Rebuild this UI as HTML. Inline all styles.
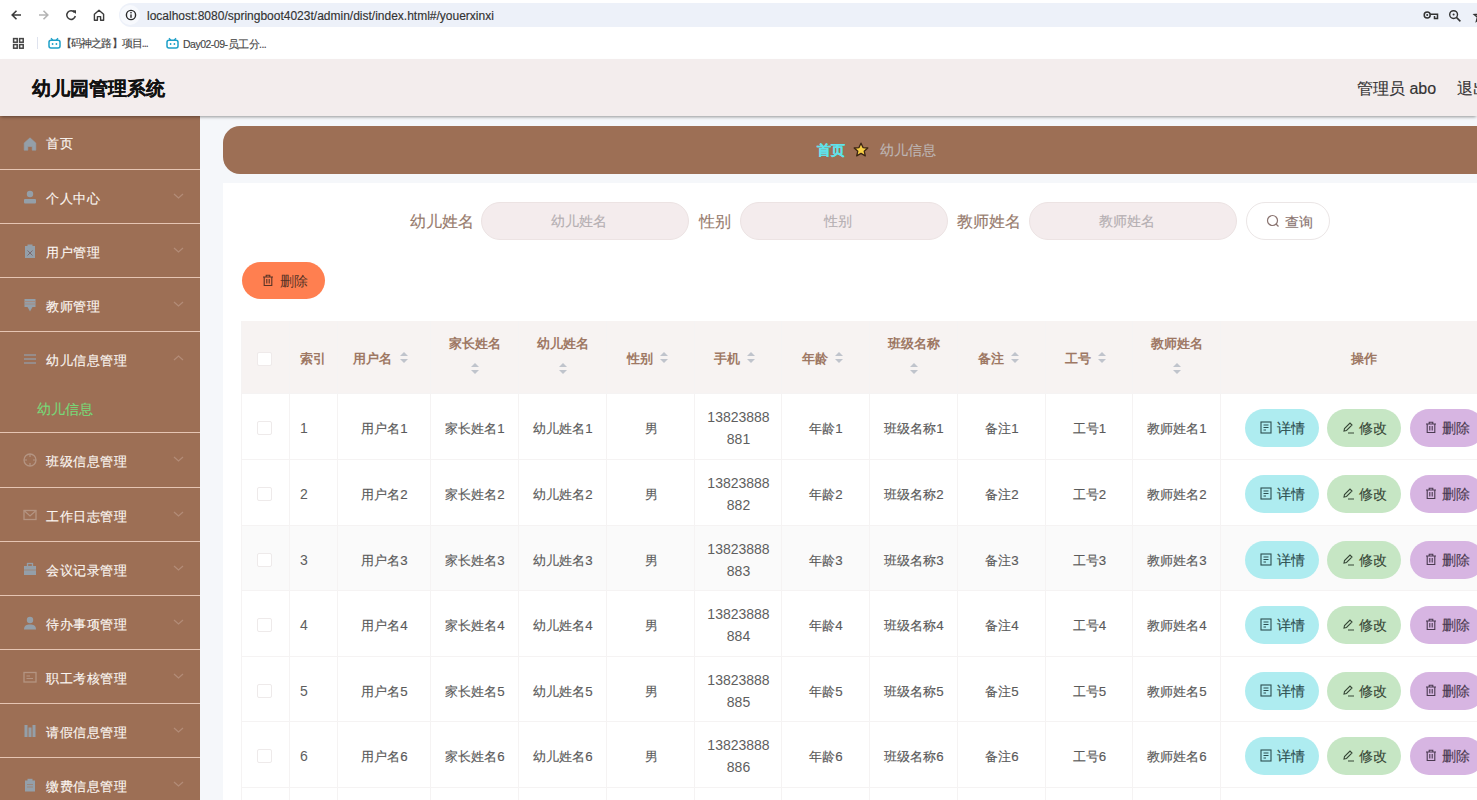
<!DOCTYPE html><html><head><meta charset="utf-8"><style>
*{margin:0;padding:0;box-sizing:border-box}
html,body{width:1477px;height:800px;overflow:hidden;background:#fff;font-family:"Liberation Sans",sans-serif;}
.a{position:absolute}
.t{position:absolute;white-space:nowrap;line-height:1;-webkit-text-stroke:0.15px currentColor}
svg{position:absolute;overflow:visible}
</style></head><body>
<div class="a" style="left:0;top:0;width:1477px;height:30px;background:#fff"></div><div class="a" style="left:119px;top:3px;width:1400px;height:24px;border-radius:12px;background:#edf1f9"></div><div class="a" style="left:120px;top:5px;width:20px;height:20px;border-radius:10px;background:#f7f9fd"></div><svg style="left:10px;top:8px;" width="14" height="14" viewBox="0 0 14 14"><path d="M11 7H2.5M6.5 2.8L2.2 7L6.5 11.2" fill="none" stroke="#3c3c3c" stroke-width="1.6"/></svg><svg style="left:37px;top:8px;" width="14" height="14" viewBox="0 0 14 14"><path d="M2 7H10.5M6.5 2.8L10.8 7L6.5 11.2" fill="none" stroke="#b4b4b4" stroke-width="1.6"/></svg><svg style="left:64px;top:8px;" width="14" height="14" viewBox="0 0 14 14"><path d="M10.6 4.6A4.3 4.3 0 1 0 11.3 8" fill="none" stroke="#3c3c3c" stroke-width="1.5"/><path d="M8.3 2.2L12 2.2L12 5.9Z" fill="#3c3c3c"/></svg><svg style="left:92px;top:8px;" width="14" height="14" viewBox="0 0 14 14"><path d="M2.4 12.2V6.2L7 2.2L11.6 6.2V12.2H8.6V8.6H5.4V12.2Z" fill="none" stroke="#3c3c3c" stroke-width="1.4" stroke-linejoin="round"/></svg><svg style="left:124px;top:8px;" width="14" height="14" viewBox="0 0 14 14"><circle cx="7" cy="7" r="4.6" fill="none" stroke="#2a2a2a" stroke-width="1.4"/><rect x="6.3" y="6.4" width="1.4" height="3.4" fill="#2a2a2a"/><rect x="6.3" y="4" width="1.4" height="1.4" fill="#2a2a2a"/></svg><div class="t" style="left:147px;top:9.5px;font-size:12px;color:#333">localhost:8080/springboot4023t/admin/dist/index.html#/youerxinxi</div><svg style="left:1423px;top:10px;" width="16" height="11" viewBox="0 0 16 11"><circle cx="4.2" cy="5" r="3" fill="none" stroke="#333" stroke-width="1.5"/><circle cx="4.2" cy="5" r="1" fill="#333"/><path d="M7.2 4.2H14.5V8.5H11.5V6" fill="none" stroke="#333" stroke-width="1.5"/></svg><svg style="left:1448px;top:9px;" width="14" height="14" viewBox="0 0 14 14"><circle cx="5.6" cy="5.6" r="3.9" fill="none" stroke="#333" stroke-width="1.4"/><circle cx="5.6" cy="5.6" r="1" fill="#333"/><path d="M8.4 8.4L12.4 12.4" stroke="#333" stroke-width="1.5"/></svg><svg style="left:1473px;top:9px;" width="14" height="14" viewBox="0 0 14 14"><path d="M7 1.5L8.6 5.3L12.7 5.6L9.6 8.2L10.6 12.2L7 10L3.4 12.2L4.4 8.2L1.3 5.6L5.4 5.3Z" fill="none" stroke="#333" stroke-width="1.4"/></svg><div class="a" style="left:0;top:30px;width:1477px;height:29px;background:#fff"></div><svg style="left:12px;top:37px;" width="13" height="13" viewBox="0 0 13 13"><rect x="1.6" y="1.6" width="3.6" height="3.6" fill="none" stroke="#454545" stroke-width="1.5"/><rect x="7.6" y="1.6" width="3.6" height="3.6" fill="none" stroke="#454545" stroke-width="1.5"/><rect x="1.6" y="7.6" width="3.6" height="3.6" fill="none" stroke="#454545" stroke-width="1.5"/><rect x="7.6" y="7.6" width="3.6" height="3.6" fill="none" stroke="#454545" stroke-width="1.5"/></svg><div class="a" style="left:37px;top:37px;width:1px;height:12px;background:#dfe3ee"></div><svg style="left:48px;top:37px;" width="13" height="12" viewBox="0 0 13 12"><path d="M3 1.2L4.8 3.2M10 1.2L8.2 3.2" stroke="#1ea0c8" stroke-width="1.3"/><rect x="1" y="3.3" width="11" height="7.6" rx="2" fill="none" stroke="#1ea0c8" stroke-width="1.5"/><circle cx="4.6" cy="7" r=".9" fill="#1ea0c8"/><circle cx="8.4" cy="7" r=".9" fill="#1ea0c8"/></svg><svg style="left:166px;top:37px;" width="13" height="12" viewBox="0 0 13 12"><path d="M3 1.2L4.8 3.2M10 1.2L8.2 3.2" stroke="#1ea0c8" stroke-width="1.3"/><rect x="1" y="3.3" width="11" height="7.6" rx="2" fill="none" stroke="#1ea0c8" stroke-width="1.5"/><circle cx="4.6" cy="7" r=".9" fill="#1ea0c8"/><circle cx="8.4" cy="7" r=".9" fill="#1ea0c8"/></svg><div class="t" style="left:61px;top:38px;font-size:10.5px;letter-spacing:-0.9px;color:#4a4a4a;color:#474747">【码神之路】项目...</div><div class="t" style="left:183px;top:39px;font-size:10.5px;letter-spacing:-0.5px;color:#474747">Day02-09-员工分...</div><div class="a" style="left:0;top:59px;width:1477px;height:57px;background:#f3eded;box-shadow:0 2px 3px -1px rgba(0,0,0,.4);z-index:2"></div><div class="t" style="left:32px;top:79px;font-size:19px;font-weight:bold;color:#111;z-index:3">幼儿园管理系统</div><div class="t" style="left:1357px;top:81px;font-size:16px;color:#333;z-index:3">管理员 abo</div><div class="t" style="left:1457px;top:81px;font-size:16px;color:#333;z-index:3">退出</div><div class="a" style="left:200px;top:116px;width:1277px;height:684px;background:#f5f7fa"></div><div class="a" style="left:0;top:116px;width:200px;height:684px;background:#9d6f55"></div><div class="t" style="left:46px;top:137px;font-size:13.3px;letter-spacing:0.55px;color:#fbf6f2">首页</div><svg style="left:23px;top:136px;" width="14" height="14" viewBox="0 0 14 14"><path d="M7 1.8L12.8 7V14.2H9.2V10.5H4.8V14.2H1.2V7Z" fill="#949fa9" stroke="#949fa9" stroke-width=".6" stroke-linejoin="round"/></svg><div class="a" style="left:0;top:169px;width:200px;height:1px;background:#e6c5b3"></div><div class="t" style="left:46px;top:192px;font-size:13.3px;letter-spacing:0.55px;color:#fbf6f2">个人中心</div><svg style="left:23px;top:190px;" width="14" height="14" viewBox="0 0 14 14"><circle cx="7" cy="4" r="3.2" fill="#949fa9"/><rect x="1" y="9" width="12" height="4.5" rx="1" fill="#949fa9"/></svg><svg style="left:173px;top:193px;" width="11" height="6" viewBox="0 0 11 6"><path d="M1 1L5.5 5L10 1" fill="none" stroke="#b38c78" stroke-width="1.2"/></svg><div class="a" style="left:0;top:223px;width:200px;height:1px;background:#e6c5b3"></div><div class="t" style="left:46px;top:246px;font-size:13.3px;letter-spacing:0.55px;color:#fbf6f2">用户管理</div><svg style="left:23px;top:244px;" width="14" height="14" viewBox="0 0 14 14"><rect x="2" y="2" width="10" height="12" fill="#949fa9"/><rect x="4.5" y="0.5" width="5" height="2.5" fill="#949fa9"/><path d="M4.5 6.5L9.5 11.5M9.5 6.5L4.5 11.5" stroke="#7a6a70" stroke-width="1"/></svg><svg style="left:173px;top:247px;" width="11" height="6" viewBox="0 0 11 6"><path d="M1 1L5.5 5L10 1" fill="none" stroke="#b38c78" stroke-width="1.2"/></svg><div class="a" style="left:0;top:277px;width:200px;height:1px;background:#e6c5b3"></div><div class="t" style="left:46px;top:300px;font-size:13.3px;letter-spacing:0.55px;color:#fbf6f2">教师管理</div><svg style="left:23px;top:298px;" width="14" height="14" viewBox="0 0 14 14"><rect x="1.5" y="1" width="11" height="8" fill="#949fa9"/><path d="M1.5 3.5H12.5M1.5 6H12.5" stroke="#a88878" stroke-width=".8"/><path d="M4.5 9L7 13.5L9.5 9Z" fill="#949fa9"/></svg><svg style="left:173px;top:301px;" width="11" height="6" viewBox="0 0 11 6"><path d="M1 1L5.5 5L10 1" fill="none" stroke="#b38c78" stroke-width="1.2"/></svg><div class="a" style="left:0;top:331px;width:200px;height:1px;background:#e6c5b3"></div><div class="t" style="left:46px;top:354px;font-size:13.3px;letter-spacing:0.55px;color:#fbf6f2">幼儿信息管理</div><svg style="left:23px;top:352px;" width="14" height="14" viewBox="0 0 14 14"><path d="M1 3H13M1 7H13M1 11H13" stroke="#949fa9" stroke-width="1.6" opacity=".85"/></svg><svg style="left:173px;top:355px;" width="11" height="6" viewBox="0 0 11 6"><path d="M1 5L5.5 1L10 5" fill="none" stroke="#b38c78" stroke-width="1.2"/></svg><div class="a" style="left:0;top:432px;width:200px;height:1px;background:#e6c5b3"></div><div class="t" style="left:46px;top:455px;font-size:13.3px;letter-spacing:0.55px;color:#fbf6f2">班级信息管理</div><svg style="left:23px;top:453px;" width="14" height="14" viewBox="0 0 14 14"><circle cx="7" cy="7" r="6" fill="none" stroke="#b49482" stroke-width="1.3"/><path d="M7 1V4M7 10V13M1 7H4M10 7H13" stroke="#b49482" stroke-width="1.2"/></svg><svg style="left:173px;top:456px;" width="11" height="6" viewBox="0 0 11 6"><path d="M1 1L5.5 5L10 1" fill="none" stroke="#b38c78" stroke-width="1.2"/></svg><div class="a" style="left:0;top:487px;width:200px;height:1px;background:#e6c5b3"></div><div class="t" style="left:46px;top:510px;font-size:13.3px;letter-spacing:0.55px;color:#fbf6f2">工作日志管理</div><svg style="left:23px;top:508px;" width="14" height="14" viewBox="0 0 14 14"><rect x="1" y="2.5" width="12" height="9" fill="none" stroke="#b49482" stroke-width="1.3"/><path d="M1 2.5L7 8L13 2.5" fill="none" stroke="#b49482" stroke-width="1.2"/></svg><svg style="left:173px;top:511px;" width="11" height="6" viewBox="0 0 11 6"><path d="M1 1L5.5 5L10 1" fill="none" stroke="#b38c78" stroke-width="1.2"/></svg><div class="a" style="left:0;top:541px;width:200px;height:1px;background:#e6c5b3"></div><div class="t" style="left:46px;top:564px;font-size:13.3px;letter-spacing:0.55px;color:#fbf6f2">会议记录管理</div><svg style="left:23px;top:562px;" width="14" height="14" viewBox="0 0 14 14"><rect x="1" y="4" width="12" height="9" fill="#949fa9"/><rect x="4.5" y="1.5" width="5" height="3" fill="none" stroke="#949fa9" stroke-width="1.3"/><path d="M1 8H13" stroke="#a08070" stroke-width=".8"/></svg><svg style="left:173px;top:565px;" width="11" height="6" viewBox="0 0 11 6"><path d="M1 1L5.5 5L10 1" fill="none" stroke="#b38c78" stroke-width="1.2"/></svg><div class="a" style="left:0;top:595px;width:200px;height:1px;background:#e6c5b3"></div><div class="t" style="left:46px;top:618px;font-size:13.3px;letter-spacing:0.55px;color:#fbf6f2">待办事项管理</div><svg style="left:23px;top:616px;" width="14" height="14" viewBox="0 0 14 14"><circle cx="7" cy="4" r="3.2" fill="#949fa9"/><path d="M1 13.5C1 9.5 3.5 8.5 7 8.5S13 9.5 13 13.5Z" fill="#949fa9"/></svg><svg style="left:173px;top:619px;" width="11" height="6" viewBox="0 0 11 6"><path d="M1 1L5.5 5L10 1" fill="none" stroke="#b38c78" stroke-width="1.2"/></svg><div class="a" style="left:0;top:649px;width:200px;height:1px;background:#e6c5b3"></div><div class="t" style="left:46px;top:672px;font-size:13.3px;letter-spacing:0.55px;color:#fbf6f2">职工考核管理</div><svg style="left:23px;top:670px;" width="14" height="14" viewBox="0 0 14 14"><rect x="1" y="2.5" width="12" height="9.5" fill="none" stroke="#b49482" stroke-width="1.3"/><path d="M3.5 6H7M3.5 8.5H10" stroke="#b49482" stroke-width="1"/></svg><svg style="left:173px;top:673px;" width="11" height="6" viewBox="0 0 11 6"><path d="M1 1L5.5 5L10 1" fill="none" stroke="#b38c78" stroke-width="1.2"/></svg><div class="a" style="left:0;top:703px;width:200px;height:1px;background:#e6c5b3"></div><div class="t" style="left:46px;top:726px;font-size:13.3px;letter-spacing:0.55px;color:#fbf6f2">请假信息管理</div><svg style="left:23px;top:724px;" width="14" height="14" viewBox="0 0 14 14"><rect x="1.5" y="1" width="3" height="12" fill="#949fa9"/><rect x="5.5" y="3.5" width="3" height="9.5" fill="#949fa9"/><rect x="9.5" y="1" width="3" height="12" fill="#949fa9"/></svg><svg style="left:173px;top:727px;" width="11" height="6" viewBox="0 0 11 6"><path d="M1 1L5.5 5L10 1" fill="none" stroke="#b38c78" stroke-width="1.2"/></svg><div class="a" style="left:0;top:757px;width:200px;height:1px;background:#e6c5b3"></div><div class="t" style="left:46px;top:780px;font-size:13.3px;letter-spacing:0.55px;color:#fbf6f2">缴费信息管理</div><svg style="left:23px;top:778px;" width="14" height="14" viewBox="0 0 14 14"><rect x="2" y="2.5" width="10" height="11" fill="#949fa9"/><rect x="4.5" y="0.8" width="5" height="2.5" fill="#949fa9"/><path d="M4 6.5H10M4 9H10" stroke="#a08070" stroke-width=".8"/></svg><svg style="left:173px;top:781px;" width="11" height="6" viewBox="0 0 11 6"><path d="M1 1L5.5 5L10 1" fill="none" stroke="#b38c78" stroke-width="1.2"/></svg><div class="t" style="left:37px;top:402.5px;font-size:13.5px;color:#78d878">幼儿信息</div><div class="a" style="left:223px;top:126px;width:1300px;height:48px;border-radius:17px;background:#9d6f55"></div><div class="t" style="left:817px;top:143px;font-size:14px;font-weight:bold;color:#5fe3ec">首页</div><svg style="left:853px;top:142px;" width="16" height="15" viewBox="0 0 16 15"><path d="M8 1.2L10 5.6L14.8 6L11.2 9.2L12.3 13.9L8 11.4L3.7 13.9L4.8 9.2L1.2 6L6 5.6Z" fill="#f7cf45" stroke="#3a2414" stroke-width="1.3" stroke-linejoin="round"/></svg><div class="t" style="left:880px;top:143px;font-size:14px;color:#bdb5b3">幼儿信息</div><div class="a" style="left:223px;top:183px;width:1300px;height:700px;background:#fff"></div><div class="t" style="left:410px;top:214px;font-size:16px;color:#977b6d">幼儿姓名</div><div class="a" style="left:481px;top:202px;width:208px;height:38px;border-radius:19px;background:#f4eced;border:1px solid #ece3e3"></div><div class="t" style="left:475px;width:208px;text-align:center;top:214px;font-size:14px;color:#b5afb2">幼儿姓名</div><div class="t" style="left:699px;top:214px;font-size:16px;color:#977b6d">性别</div><div class="a" style="left:740px;top:202px;width:208px;height:38px;border-radius:19px;background:#f4eced;border:1px solid #ece3e3"></div><div class="t" style="left:734px;width:208px;text-align:center;top:214px;font-size:14px;color:#b5afb2">性别</div><div class="t" style="left:957px;top:214px;font-size:16px;color:#977b6d">教师姓名</div><div class="a" style="left:1029px;top:202px;width:208px;height:38px;border-radius:19px;background:#f4eced;border:1px solid #ece3e3"></div><div class="t" style="left:1023px;width:208px;text-align:center;top:214px;font-size:14px;color:#b5afb2">教师姓名</div><div class="a" style="left:1246px;top:202px;width:84px;height:38px;border-radius:19px;background:#fff;border:1px solid #ebe6e6"></div><svg style="left:1266px;top:214px;" width="14" height="14" viewBox="0 0 14 14"><circle cx="6.5" cy="6.5" r="5" fill="none" stroke="#8a7470" stroke-width="1.2"/><path d="M10 10L12.5 12.5" stroke="#8a7470" stroke-width="1.2"/></svg><div class="t" style="left:1285px;top:215px;font-size:14px;color:#8a7470">查询</div><div class="a" style="left:242px;top:262px;width:83px;height:37px;border-radius:19px;background:#ff7f50"></div><svg style="left:262px;top:274px;" width="12" height="13" viewBox="0 0 12 13"><path d="M1 3H11M4.2 3V1.2H7.8V3M2.2 3V11.5H9.8V3M4.8 5V9.5M7.2 5V9.5" fill="none" stroke="#5a3426" stroke-width="1.1"/></svg><div class="t" style="left:280px;top:274px;font-size:14px;color:#5a3426;-webkit-text-stroke:0">删除</div><div class="a" style="left:242px;top:321px;width:1300px;height:73px;background:#f7f3f2"></div><div class="a" style="left:242px;top:526px;width:1300px;height:65px;background:#fafafa"></div><div class="a" style="left:241px;top:321px;width:1px;height:480px;background:#f5f3f3"></div><div class="a" style="left:289px;top:321px;width:1px;height:480px;background:#f5f3f3"></div><div class="a" style="left:337px;top:321px;width:1px;height:480px;background:#f5f3f3"></div><div class="a" style="left:430px;top:321px;width:1px;height:480px;background:#f5f3f3"></div><div class="a" style="left:518px;top:321px;width:1px;height:480px;background:#f5f3f3"></div><div class="a" style="left:606px;top:321px;width:1px;height:480px;background:#f5f3f3"></div><div class="a" style="left:694px;top:321px;width:1px;height:480px;background:#f5f3f3"></div><div class="a" style="left:781px;top:321px;width:1px;height:480px;background:#f5f3f3"></div><div class="a" style="left:869px;top:321px;width:1px;height:480px;background:#f5f3f3"></div><div class="a" style="left:957px;top:321px;width:1px;height:480px;background:#f5f3f3"></div><div class="a" style="left:1045px;top:321px;width:1px;height:480px;background:#f5f3f3"></div><div class="a" style="left:1132px;top:321px;width:1px;height:480px;background:#f5f3f3"></div><div class="a" style="left:1220px;top:321px;width:1px;height:480px;background:#f5f3f3"></div><div class="a" style="left:1509px;top:321px;width:1px;height:480px;background:#f5f3f3"></div><div class="a" style="left:242px;top:393px;width:1300px;height:1px;background:#f5f3f3"></div><div class="a" style="left:242px;top:459px;width:1300px;height:1px;background:#f5f3f3"></div><div class="a" style="left:242px;top:525px;width:1300px;height:1px;background:#f5f3f3"></div><div class="a" style="left:242px;top:590px;width:1300px;height:1px;background:#f5f3f3"></div><div class="a" style="left:242px;top:656px;width:1300px;height:1px;background:#f5f3f3"></div><div class="a" style="left:242px;top:721px;width:1300px;height:1px;background:#f5f3f3"></div><div class="a" style="left:242px;top:787px;width:1300px;height:1px;background:#f5f3f3"></div><div class="a" style="left:242px;top:853px;width:1300px;height:1px;background:#f5f3f3"></div><div class="a" style="left:257px;top:352px;width:15px;height:14px;border:1px solid #efeaea;background:#fff;border-radius:2px"></div><div class="t" style="left:300px;top:351.5px;font-size:13.3px;font-weight:bold;-webkit-text-stroke:0;color:#9e7864">索引</div><div class="t" style="left:353px;top:351.5px;font-size:13.3px;font-weight:bold;-webkit-text-stroke:0;color:#9e7864">用户名</div><svg style="left:400px;top:352px;" width="8" height="11" viewBox="0 0 8 11"><path d="M0 4L4 0L8 4Z" fill="#c0c4cc"/><path d="M0 7L4 11L8 7Z" fill="#c0c4cc"/></svg><div class="t" style="left:431px;width:88px;text-align:center;top:336.5px;font-size:13.3px;font-weight:bold;-webkit-text-stroke:0;color:#9e7864">家长姓名</div><svg style="left:471px;top:363px;" width="8" height="11" viewBox="0 0 8 11"><path d="M0 4L4 0L8 4Z" fill="#c0c4cc"/><path d="M0 7L4 11L8 7Z" fill="#c0c4cc"/></svg><div class="t" style="left:519px;width:88px;text-align:center;top:336.5px;font-size:13.3px;font-weight:bold;-webkit-text-stroke:0;color:#9e7864">幼儿姓名</div><svg style="left:559px;top:363px;" width="8" height="11" viewBox="0 0 8 11"><path d="M0 4L4 0L8 4Z" fill="#c0c4cc"/><path d="M0 7L4 11L8 7Z" fill="#c0c4cc"/></svg><div class="t" style="left:627px;top:351.5px;font-size:13.3px;font-weight:bold;-webkit-text-stroke:0;color:#9e7864">性别</div><svg style="left:660px;top:352px;" width="8" height="11" viewBox="0 0 8 11"><path d="M0 4L4 0L8 4Z" fill="#c0c4cc"/><path d="M0 7L4 11L8 7Z" fill="#c0c4cc"/></svg><div class="t" style="left:714px;top:351.5px;font-size:13.3px;font-weight:bold;-webkit-text-stroke:0;color:#9e7864">手机</div><svg style="left:747px;top:352px;" width="8" height="11" viewBox="0 0 8 11"><path d="M0 4L4 0L8 4Z" fill="#c0c4cc"/><path d="M0 7L4 11L8 7Z" fill="#c0c4cc"/></svg><div class="t" style="left:802px;top:351.5px;font-size:13.3px;font-weight:bold;-webkit-text-stroke:0;color:#9e7864">年龄</div><svg style="left:835px;top:352px;" width="8" height="11" viewBox="0 0 8 11"><path d="M0 4L4 0L8 4Z" fill="#c0c4cc"/><path d="M0 7L4 11L8 7Z" fill="#c0c4cc"/></svg><div class="t" style="left:870px;width:88px;text-align:center;top:336.5px;font-size:13.3px;font-weight:bold;-webkit-text-stroke:0;color:#9e7864">班级名称</div><svg style="left:910px;top:363px;" width="8" height="11" viewBox="0 0 8 11"><path d="M0 4L4 0L8 4Z" fill="#c0c4cc"/><path d="M0 7L4 11L8 7Z" fill="#c0c4cc"/></svg><div class="t" style="left:978px;top:351.5px;font-size:13.3px;font-weight:bold;-webkit-text-stroke:0;color:#9e7864">备注</div><svg style="left:1011px;top:352px;" width="8" height="11" viewBox="0 0 8 11"><path d="M0 4L4 0L8 4Z" fill="#c0c4cc"/><path d="M0 7L4 11L8 7Z" fill="#c0c4cc"/></svg><div class="t" style="left:1065px;top:351.5px;font-size:13.3px;font-weight:bold;-webkit-text-stroke:0;color:#9e7864">工号</div><svg style="left:1098px;top:352px;" width="8" height="11" viewBox="0 0 8 11"><path d="M0 4L4 0L8 4Z" fill="#c0c4cc"/><path d="M0 7L4 11L8 7Z" fill="#c0c4cc"/></svg><div class="t" style="left:1133px;width:88px;text-align:center;top:336.5px;font-size:13.3px;font-weight:bold;-webkit-text-stroke:0;color:#9e7864">教师姓名</div><svg style="left:1173px;top:363px;" width="8" height="11" viewBox="0 0 8 11"><path d="M0 4L4 0L8 4Z" fill="#c0c4cc"/><path d="M0 7L4 11L8 7Z" fill="#c0c4cc"/></svg><div class="t" style="left:1219px;width:289px;text-align:center;top:351.5px;font-size:13.3px;font-weight:bold;-webkit-text-stroke:0;color:#9e7864">操作</div><div class="a" style="left:257px;top:421px;width:15px;height:14px;border:1px solid #eeeaea;background:#fff;border-radius:2px"></div><div class="t" style="left:300px;top:421px;font-size:14px;color:#5e5e5e;-webkit-text-stroke:0">1</div><div class="t" style="left:338px;width:93px;text-align:center;top:422px;font-size:13.3px;color:#5a5a5a">用户名1</div><div class="t" style="left:431px;width:88px;text-align:center;top:422px;font-size:13.3px;color:#5a5a5a">家长姓名1</div><div class="t" style="left:519px;width:88px;text-align:center;top:422px;font-size:13.3px;color:#5a5a5a">幼儿姓名1</div><div class="t" style="left:607px;width:88px;text-align:center;top:422px;font-size:13.3px;color:#5a5a5a">男</div><div class="t" style="left:695px;width:87px;text-align:center;top:406px;font-size:14px;color:#5e5e5e;-webkit-text-stroke:0;line-height:22px">13823888<br>881</div><div class="t" style="left:782px;width:88px;text-align:center;top:422px;font-size:13.3px;color:#5a5a5a">年龄1</div><div class="t" style="left:870px;width:88px;text-align:center;top:422px;font-size:13.3px;color:#5a5a5a">班级名称1</div><div class="t" style="left:958px;width:88px;text-align:center;top:422px;font-size:13.3px;color:#5a5a5a">备注1</div><div class="t" style="left:1046px;width:87px;text-align:center;top:422px;font-size:13.3px;color:#5a5a5a">工号1</div><div class="t" style="left:1133px;width:88px;text-align:center;top:422px;font-size:13.3px;color:#5a5a5a">教师姓名1</div><div class="a" style="left:1245px;top:409px;width:74px;height:38px;border-radius:19px;background:#aeecf0"></div><svg style="left:1260px;top:421px;" width="12" height="13" viewBox="0 0 12 13"><rect x="1" y="1" width="10" height="11" fill="none" stroke="#2d4f50" stroke-width="1.1"/><path d="M3.5 4H8.5M3.5 6.5H8.5M3.5 9H6" stroke="#2d4f50" stroke-width="1"/></svg><div class="t" style="left:1277px;top:421.5px;font-size:13.6px;color:#2d4f50">详情</div><div class="a" style="left:1327px;top:409px;width:74px;height:38px;border-radius:19px;background:#c6e6c4"></div><svg style="left:1342px;top:421px;" width="12" height="13" viewBox="0 0 12 13"><path d="M2 10L2.5 7.5L8 2L10 4L4.5 9.5Z M6 12H12" fill="none" stroke="#374737" stroke-width="1.1"/></svg><div class="t" style="left:1359px;top:421.5px;font-size:13.6px;color:#374737">修改</div><div class="a" style="left:1410px;top:409px;width:74px;height:38px;border-radius:19px;background:#d7b5e2"></div><svg style="left:1425px;top:421px;" width="12" height="13" viewBox="0 0 12 13"><path d="M1 3H11M4.2 3V1.2H7.8V3M2.2 3V11.5H9.8V3M4.8 5V9.5M7.2 5V9.5" fill="none" stroke="#4a3a50" stroke-width="1.1"/></svg><div class="t" style="left:1442px;top:421.5px;font-size:13.6px;color:#4a3a50">删除</div><div class="a" style="left:257px;top:487px;width:15px;height:14px;border:1px solid #eeeaea;background:#fff;border-radius:2px"></div><div class="t" style="left:300px;top:487px;font-size:14px;color:#5e5e5e;-webkit-text-stroke:0">2</div><div class="t" style="left:338px;width:93px;text-align:center;top:488px;font-size:13.3px;color:#5a5a5a">用户名2</div><div class="t" style="left:431px;width:88px;text-align:center;top:488px;font-size:13.3px;color:#5a5a5a">家长姓名2</div><div class="t" style="left:519px;width:88px;text-align:center;top:488px;font-size:13.3px;color:#5a5a5a">幼儿姓名2</div><div class="t" style="left:607px;width:88px;text-align:center;top:488px;font-size:13.3px;color:#5a5a5a">男</div><div class="t" style="left:695px;width:87px;text-align:center;top:472px;font-size:14px;color:#5e5e5e;-webkit-text-stroke:0;line-height:22px">13823888<br>882</div><div class="t" style="left:782px;width:88px;text-align:center;top:488px;font-size:13.3px;color:#5a5a5a">年龄2</div><div class="t" style="left:870px;width:88px;text-align:center;top:488px;font-size:13.3px;color:#5a5a5a">班级名称2</div><div class="t" style="left:958px;width:88px;text-align:center;top:488px;font-size:13.3px;color:#5a5a5a">备注2</div><div class="t" style="left:1046px;width:87px;text-align:center;top:488px;font-size:13.3px;color:#5a5a5a">工号2</div><div class="t" style="left:1133px;width:88px;text-align:center;top:488px;font-size:13.3px;color:#5a5a5a">教师姓名2</div><div class="a" style="left:1245px;top:475px;width:74px;height:38px;border-radius:19px;background:#aeecf0"></div><svg style="left:1260px;top:487px;" width="12" height="13" viewBox="0 0 12 13"><rect x="1" y="1" width="10" height="11" fill="none" stroke="#2d4f50" stroke-width="1.1"/><path d="M3.5 4H8.5M3.5 6.5H8.5M3.5 9H6" stroke="#2d4f50" stroke-width="1"/></svg><div class="t" style="left:1277px;top:487.5px;font-size:13.6px;color:#2d4f50">详情</div><div class="a" style="left:1327px;top:475px;width:74px;height:38px;border-radius:19px;background:#c6e6c4"></div><svg style="left:1342px;top:487px;" width="12" height="13" viewBox="0 0 12 13"><path d="M2 10L2.5 7.5L8 2L10 4L4.5 9.5Z M6 12H12" fill="none" stroke="#374737" stroke-width="1.1"/></svg><div class="t" style="left:1359px;top:487.5px;font-size:13.6px;color:#374737">修改</div><div class="a" style="left:1410px;top:475px;width:74px;height:38px;border-radius:19px;background:#d7b5e2"></div><svg style="left:1425px;top:487px;" width="12" height="13" viewBox="0 0 12 13"><path d="M1 3H11M4.2 3V1.2H7.8V3M2.2 3V11.5H9.8V3M4.8 5V9.5M7.2 5V9.5" fill="none" stroke="#4a3a50" stroke-width="1.1"/></svg><div class="t" style="left:1442px;top:487.5px;font-size:13.6px;color:#4a3a50">删除</div><div class="a" style="left:257px;top:553px;width:15px;height:14px;border:1px solid #eeeaea;background:#fff;border-radius:2px"></div><div class="t" style="left:300px;top:553px;font-size:14px;color:#5e5e5e;-webkit-text-stroke:0">3</div><div class="t" style="left:338px;width:93px;text-align:center;top:554px;font-size:13.3px;color:#5a5a5a">用户名3</div><div class="t" style="left:431px;width:88px;text-align:center;top:554px;font-size:13.3px;color:#5a5a5a">家长姓名3</div><div class="t" style="left:519px;width:88px;text-align:center;top:554px;font-size:13.3px;color:#5a5a5a">幼儿姓名3</div><div class="t" style="left:607px;width:88px;text-align:center;top:554px;font-size:13.3px;color:#5a5a5a">男</div><div class="t" style="left:695px;width:87px;text-align:center;top:538px;font-size:14px;color:#5e5e5e;-webkit-text-stroke:0;line-height:22px">13823888<br>883</div><div class="t" style="left:782px;width:88px;text-align:center;top:554px;font-size:13.3px;color:#5a5a5a">年龄3</div><div class="t" style="left:870px;width:88px;text-align:center;top:554px;font-size:13.3px;color:#5a5a5a">班级名称3</div><div class="t" style="left:958px;width:88px;text-align:center;top:554px;font-size:13.3px;color:#5a5a5a">备注3</div><div class="t" style="left:1046px;width:87px;text-align:center;top:554px;font-size:13.3px;color:#5a5a5a">工号3</div><div class="t" style="left:1133px;width:88px;text-align:center;top:554px;font-size:13.3px;color:#5a5a5a">教师姓名3</div><div class="a" style="left:1245px;top:541px;width:74px;height:38px;border-radius:19px;background:#aeecf0"></div><svg style="left:1260px;top:553px;" width="12" height="13" viewBox="0 0 12 13"><rect x="1" y="1" width="10" height="11" fill="none" stroke="#2d4f50" stroke-width="1.1"/><path d="M3.5 4H8.5M3.5 6.5H8.5M3.5 9H6" stroke="#2d4f50" stroke-width="1"/></svg><div class="t" style="left:1277px;top:553.5px;font-size:13.6px;color:#2d4f50">详情</div><div class="a" style="left:1327px;top:541px;width:74px;height:38px;border-radius:19px;background:#c6e6c4"></div><svg style="left:1342px;top:553px;" width="12" height="13" viewBox="0 0 12 13"><path d="M2 10L2.5 7.5L8 2L10 4L4.5 9.5Z M6 12H12" fill="none" stroke="#374737" stroke-width="1.1"/></svg><div class="t" style="left:1359px;top:553.5px;font-size:13.6px;color:#374737">修改</div><div class="a" style="left:1410px;top:541px;width:74px;height:38px;border-radius:19px;background:#d7b5e2"></div><svg style="left:1425px;top:553px;" width="12" height="13" viewBox="0 0 12 13"><path d="M1 3H11M4.2 3V1.2H7.8V3M2.2 3V11.5H9.8V3M4.8 5V9.5M7.2 5V9.5" fill="none" stroke="#4a3a50" stroke-width="1.1"/></svg><div class="t" style="left:1442px;top:553.5px;font-size:13.6px;color:#4a3a50">删除</div><div class="a" style="left:257px;top:618px;width:15px;height:14px;border:1px solid #eeeaea;background:#fff;border-radius:2px"></div><div class="t" style="left:300px;top:618px;font-size:14px;color:#5e5e5e;-webkit-text-stroke:0">4</div><div class="t" style="left:338px;width:93px;text-align:center;top:619px;font-size:13.3px;color:#5a5a5a">用户名4</div><div class="t" style="left:431px;width:88px;text-align:center;top:619px;font-size:13.3px;color:#5a5a5a">家长姓名4</div><div class="t" style="left:519px;width:88px;text-align:center;top:619px;font-size:13.3px;color:#5a5a5a">幼儿姓名4</div><div class="t" style="left:607px;width:88px;text-align:center;top:619px;font-size:13.3px;color:#5a5a5a">男</div><div class="t" style="left:695px;width:87px;text-align:center;top:603px;font-size:14px;color:#5e5e5e;-webkit-text-stroke:0;line-height:22px">13823888<br>884</div><div class="t" style="left:782px;width:88px;text-align:center;top:619px;font-size:13.3px;color:#5a5a5a">年龄4</div><div class="t" style="left:870px;width:88px;text-align:center;top:619px;font-size:13.3px;color:#5a5a5a">班级名称4</div><div class="t" style="left:958px;width:88px;text-align:center;top:619px;font-size:13.3px;color:#5a5a5a">备注4</div><div class="t" style="left:1046px;width:87px;text-align:center;top:619px;font-size:13.3px;color:#5a5a5a">工号4</div><div class="t" style="left:1133px;width:88px;text-align:center;top:619px;font-size:13.3px;color:#5a5a5a">教师姓名4</div><div class="a" style="left:1245px;top:606px;width:74px;height:38px;border-radius:19px;background:#aeecf0"></div><svg style="left:1260px;top:618px;" width="12" height="13" viewBox="0 0 12 13"><rect x="1" y="1" width="10" height="11" fill="none" stroke="#2d4f50" stroke-width="1.1"/><path d="M3.5 4H8.5M3.5 6.5H8.5M3.5 9H6" stroke="#2d4f50" stroke-width="1"/></svg><div class="t" style="left:1277px;top:618.5px;font-size:13.6px;color:#2d4f50">详情</div><div class="a" style="left:1327px;top:606px;width:74px;height:38px;border-radius:19px;background:#c6e6c4"></div><svg style="left:1342px;top:618px;" width="12" height="13" viewBox="0 0 12 13"><path d="M2 10L2.5 7.5L8 2L10 4L4.5 9.5Z M6 12H12" fill="none" stroke="#374737" stroke-width="1.1"/></svg><div class="t" style="left:1359px;top:618.5px;font-size:13.6px;color:#374737">修改</div><div class="a" style="left:1410px;top:606px;width:74px;height:38px;border-radius:19px;background:#d7b5e2"></div><svg style="left:1425px;top:618px;" width="12" height="13" viewBox="0 0 12 13"><path d="M1 3H11M4.2 3V1.2H7.8V3M2.2 3V11.5H9.8V3M4.8 5V9.5M7.2 5V9.5" fill="none" stroke="#4a3a50" stroke-width="1.1"/></svg><div class="t" style="left:1442px;top:618.5px;font-size:13.6px;color:#4a3a50">删除</div><div class="a" style="left:257px;top:684px;width:15px;height:14px;border:1px solid #eeeaea;background:#fff;border-radius:2px"></div><div class="t" style="left:300px;top:684px;font-size:14px;color:#5e5e5e;-webkit-text-stroke:0">5</div><div class="t" style="left:338px;width:93px;text-align:center;top:685px;font-size:13.3px;color:#5a5a5a">用户名5</div><div class="t" style="left:431px;width:88px;text-align:center;top:685px;font-size:13.3px;color:#5a5a5a">家长姓名5</div><div class="t" style="left:519px;width:88px;text-align:center;top:685px;font-size:13.3px;color:#5a5a5a">幼儿姓名5</div><div class="t" style="left:607px;width:88px;text-align:center;top:685px;font-size:13.3px;color:#5a5a5a">男</div><div class="t" style="left:695px;width:87px;text-align:center;top:669px;font-size:14px;color:#5e5e5e;-webkit-text-stroke:0;line-height:22px">13823888<br>885</div><div class="t" style="left:782px;width:88px;text-align:center;top:685px;font-size:13.3px;color:#5a5a5a">年龄5</div><div class="t" style="left:870px;width:88px;text-align:center;top:685px;font-size:13.3px;color:#5a5a5a">班级名称5</div><div class="t" style="left:958px;width:88px;text-align:center;top:685px;font-size:13.3px;color:#5a5a5a">备注5</div><div class="t" style="left:1046px;width:87px;text-align:center;top:685px;font-size:13.3px;color:#5a5a5a">工号5</div><div class="t" style="left:1133px;width:88px;text-align:center;top:685px;font-size:13.3px;color:#5a5a5a">教师姓名5</div><div class="a" style="left:1245px;top:672px;width:74px;height:38px;border-radius:19px;background:#aeecf0"></div><svg style="left:1260px;top:684px;" width="12" height="13" viewBox="0 0 12 13"><rect x="1" y="1" width="10" height="11" fill="none" stroke="#2d4f50" stroke-width="1.1"/><path d="M3.5 4H8.5M3.5 6.5H8.5M3.5 9H6" stroke="#2d4f50" stroke-width="1"/></svg><div class="t" style="left:1277px;top:684.5px;font-size:13.6px;color:#2d4f50">详情</div><div class="a" style="left:1327px;top:672px;width:74px;height:38px;border-radius:19px;background:#c6e6c4"></div><svg style="left:1342px;top:684px;" width="12" height="13" viewBox="0 0 12 13"><path d="M2 10L2.5 7.5L8 2L10 4L4.5 9.5Z M6 12H12" fill="none" stroke="#374737" stroke-width="1.1"/></svg><div class="t" style="left:1359px;top:684.5px;font-size:13.6px;color:#374737">修改</div><div class="a" style="left:1410px;top:672px;width:74px;height:38px;border-radius:19px;background:#d7b5e2"></div><svg style="left:1425px;top:684px;" width="12" height="13" viewBox="0 0 12 13"><path d="M1 3H11M4.2 3V1.2H7.8V3M2.2 3V11.5H9.8V3M4.8 5V9.5M7.2 5V9.5" fill="none" stroke="#4a3a50" stroke-width="1.1"/></svg><div class="t" style="left:1442px;top:684.5px;font-size:13.6px;color:#4a3a50">删除</div><div class="a" style="left:257px;top:749px;width:15px;height:14px;border:1px solid #eeeaea;background:#fff;border-radius:2px"></div><div class="t" style="left:300px;top:749px;font-size:14px;color:#5e5e5e;-webkit-text-stroke:0">6</div><div class="t" style="left:338px;width:93px;text-align:center;top:750px;font-size:13.3px;color:#5a5a5a">用户名6</div><div class="t" style="left:431px;width:88px;text-align:center;top:750px;font-size:13.3px;color:#5a5a5a">家长姓名6</div><div class="t" style="left:519px;width:88px;text-align:center;top:750px;font-size:13.3px;color:#5a5a5a">幼儿姓名6</div><div class="t" style="left:607px;width:88px;text-align:center;top:750px;font-size:13.3px;color:#5a5a5a">男</div><div class="t" style="left:695px;width:87px;text-align:center;top:734px;font-size:14px;color:#5e5e5e;-webkit-text-stroke:0;line-height:22px">13823888<br>886</div><div class="t" style="left:782px;width:88px;text-align:center;top:750px;font-size:13.3px;color:#5a5a5a">年龄6</div><div class="t" style="left:870px;width:88px;text-align:center;top:750px;font-size:13.3px;color:#5a5a5a">班级名称6</div><div class="t" style="left:958px;width:88px;text-align:center;top:750px;font-size:13.3px;color:#5a5a5a">备注6</div><div class="t" style="left:1046px;width:87px;text-align:center;top:750px;font-size:13.3px;color:#5a5a5a">工号6</div><div class="t" style="left:1133px;width:88px;text-align:center;top:750px;font-size:13.3px;color:#5a5a5a">教师姓名6</div><div class="a" style="left:1245px;top:737px;width:74px;height:38px;border-radius:19px;background:#aeecf0"></div><svg style="left:1260px;top:749px;" width="12" height="13" viewBox="0 0 12 13"><rect x="1" y="1" width="10" height="11" fill="none" stroke="#2d4f50" stroke-width="1.1"/><path d="M3.5 4H8.5M3.5 6.5H8.5M3.5 9H6" stroke="#2d4f50" stroke-width="1"/></svg><div class="t" style="left:1277px;top:749.5px;font-size:13.6px;color:#2d4f50">详情</div><div class="a" style="left:1327px;top:737px;width:74px;height:38px;border-radius:19px;background:#c6e6c4"></div><svg style="left:1342px;top:749px;" width="12" height="13" viewBox="0 0 12 13"><path d="M2 10L2.5 7.5L8 2L10 4L4.5 9.5Z M6 12H12" fill="none" stroke="#374737" stroke-width="1.1"/></svg><div class="t" style="left:1359px;top:749.5px;font-size:13.6px;color:#374737">修改</div><div class="a" style="left:1410px;top:737px;width:74px;height:38px;border-radius:19px;background:#d7b5e2"></div><svg style="left:1425px;top:749px;" width="12" height="13" viewBox="0 0 12 13"><path d="M1 3H11M4.2 3V1.2H7.8V3M2.2 3V11.5H9.8V3M4.8 5V9.5M7.2 5V9.5" fill="none" stroke="#4a3a50" stroke-width="1.1"/></svg><div class="t" style="left:1442px;top:749.5px;font-size:13.6px;color:#4a3a50">删除</div><div class="a" style="left:257px;top:815px;width:15px;height:14px;border:1px solid #eeeaea;background:#fff;border-radius:2px"></div><div class="t" style="left:300px;top:815px;font-size:14px;color:#5e5e5e;-webkit-text-stroke:0">7</div><div class="t" style="left:338px;width:93px;text-align:center;top:816px;font-size:13.3px;color:#5a5a5a">用户名7</div><div class="t" style="left:431px;width:88px;text-align:center;top:816px;font-size:13.3px;color:#5a5a5a">家长姓名7</div><div class="t" style="left:519px;width:88px;text-align:center;top:816px;font-size:13.3px;color:#5a5a5a">幼儿姓名7</div><div class="t" style="left:607px;width:88px;text-align:center;top:816px;font-size:13.3px;color:#5a5a5a">男</div><div class="t" style="left:695px;width:87px;text-align:center;top:800px;font-size:14px;color:#5e5e5e;-webkit-text-stroke:0;line-height:22px">13823888<br>887</div><div class="t" style="left:782px;width:88px;text-align:center;top:816px;font-size:13.3px;color:#5a5a5a">年龄7</div><div class="t" style="left:870px;width:88px;text-align:center;top:816px;font-size:13.3px;color:#5a5a5a">班级名称7</div><div class="t" style="left:958px;width:88px;text-align:center;top:816px;font-size:13.3px;color:#5a5a5a">备注7</div><div class="t" style="left:1046px;width:87px;text-align:center;top:816px;font-size:13.3px;color:#5a5a5a">工号7</div><div class="t" style="left:1133px;width:88px;text-align:center;top:816px;font-size:13.3px;color:#5a5a5a">教师姓名7</div><div class="a" style="left:1245px;top:803px;width:74px;height:38px;border-radius:19px;background:#aeecf0"></div><svg style="left:1260px;top:815px;" width="12" height="13" viewBox="0 0 12 13"><rect x="1" y="1" width="10" height="11" fill="none" stroke="#2d4f50" stroke-width="1.1"/><path d="M3.5 4H8.5M3.5 6.5H8.5M3.5 9H6" stroke="#2d4f50" stroke-width="1"/></svg><div class="t" style="left:1277px;top:815.5px;font-size:13.6px;color:#2d4f50">详情</div><div class="a" style="left:1327px;top:803px;width:74px;height:38px;border-radius:19px;background:#c6e6c4"></div><svg style="left:1342px;top:815px;" width="12" height="13" viewBox="0 0 12 13"><path d="M2 10L2.5 7.5L8 2L10 4L4.5 9.5Z M6 12H12" fill="none" stroke="#374737" stroke-width="1.1"/></svg><div class="t" style="left:1359px;top:815.5px;font-size:13.6px;color:#374737">修改</div><div class="a" style="left:1410px;top:803px;width:74px;height:38px;border-radius:19px;background:#d7b5e2"></div><svg style="left:1425px;top:815px;" width="12" height="13" viewBox="0 0 12 13"><path d="M1 3H11M4.2 3V1.2H7.8V3M2.2 3V11.5H9.8V3M4.8 5V9.5M7.2 5V9.5" fill="none" stroke="#4a3a50" stroke-width="1.1"/></svg><div class="t" style="left:1442px;top:815.5px;font-size:13.6px;color:#4a3a50">删除</div>
</body></html>
